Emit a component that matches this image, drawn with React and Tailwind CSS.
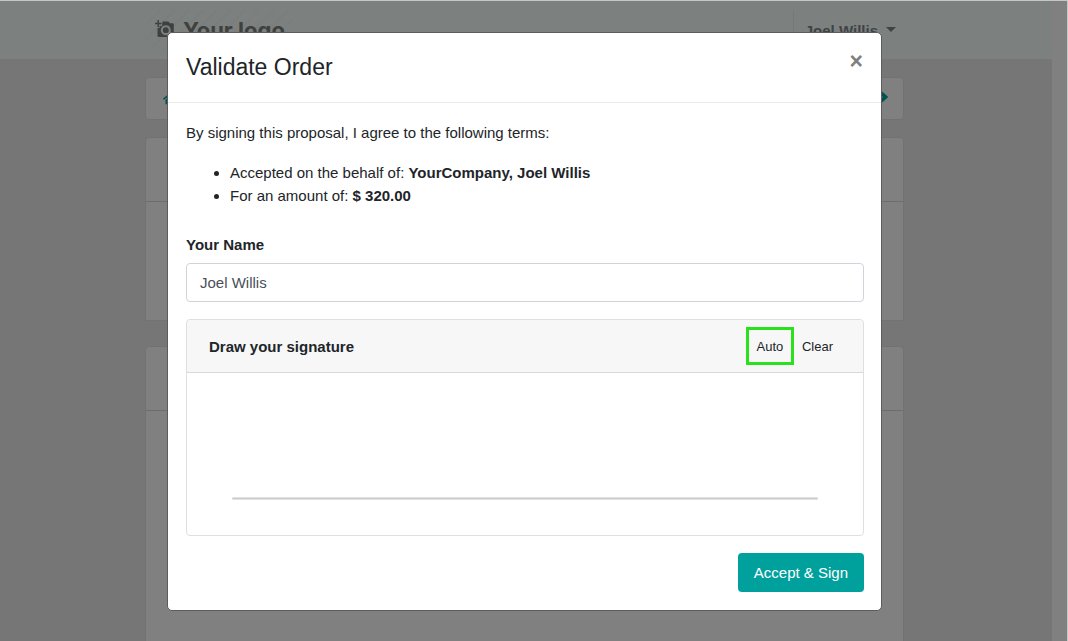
import React, { useState } from "react";
import { FaHome } from "react-icons/fa";

function CameraIcon() {
  return (
    <svg viewBox="0 0 19 18" className="mb-0.5 h-[18px] w-[19px] shrink-0" aria-hidden="true">
      <path d="M0 3.500h6.500M3.200 0v7" stroke="#3f4140" strokeWidth="1.500" />
      <path
        fillRule="evenodd"
        fill="#3f4140"
        d="M7.500 1.500h6l1.300 1.800h2.700q1.300 0 1.300 1.300v11.200q0 1.300-1.300 1.300H3.800q-1.300 0-1.300-1.300V8h2V6h2.500ZM10.800 5.200a5 5 0 1 0 .01 0Z"
      />
      <circle cx="10.800" cy="10.200" r="2.900" fill="#3f4140" />
    </svg>
  );
}

function Backdrop() {
  return (
    <div className="absolute inset-0 flex overflow-hidden bg-[#808080]" aria-hidden="true">
      <div className="flex min-w-0 flex-1 flex-col bg-[#767676]">
        <header className="flex h-[58px] shrink-0 bg-[#7c807e] pr-[3px]">
          <div className="mx-auto flex w-full max-w-[759px] items-start justify-between pt-[9px]">
            <div className="flex h-10 items-center gap-[9px] bg-[repeating-linear-gradient(135deg,#7a7e7c_0px,#7a7e7c_2px,#7c807e_2px,#7c807e_10px)] pr-2 pl-2.5">
              <CameraIcon />
              <span className="font-['Inter',sans-serif] text-[22px] leading-6 font-bold text-[#3f4140]">
                Your logo
              </span>
            </div>
            <div className="flex h-10 items-center gap-2 border-l border-[#757978] pr-2 pl-[11px] text-[15px] font-bold text-[#3f4346]">
              Joel Willis
              <svg viewBox="0 0 10 5" className="mb-0.5 h-[5px] w-2.5" aria-hidden="true">
                <path d="M0 0h10L5 5Z" fill="#3f4346" />
              </svg>
            </div>
          </div>
        </header>
        <main className="flex flex-1 flex-col pt-[18px] pr-[3px]">
          <div className="mx-auto flex w-full max-w-[759px] flex-col">
            <div className="flex h-[43px] items-center justify-between rounded border border-[#727272] bg-[#808080] pr-[15px] pl-[17px]">
              <FaHome className="size-[15px] text-[#005150]" />
              <svg viewBox="0 0 10 14" className="mb-1 h-3.5 w-2.5" aria-hidden="true">
                <path d="M1.500 1.500 7.500 7l-6 5.500" fill="none" stroke="#005150" strokeWidth="3.600" />
              </svg>
            </div>
            <div className="mt-[17px] h-[184px] rounded-t border border-[#727272] bg-[#808080]">
              <div className="h-16 border-b border-[#6d6d6d]" />
            </div>
            <div className="mt-[25px] h-[400px] rounded-t border border-[#727272] bg-[#808080]">
              <div className="h-16 border-b border-[#6d6d6d]" />
            </div>
          </div>
        </main>
      </div>
      <div className="w-[15px] shrink-0" />
    </div>
  );
}

export default function App() {
  const [name, setName] = useState("Joel Willis");
  return (
    <div className="relative flex min-h-screen border-t border-r border-[#c3c7c5] font-['Liberation_Sans',Arial,sans-serif] text-[15px] leading-[23px] text-[#212529]">
      <Backdrop />
      <div className="relative flex flex-1 items-start justify-center pt-[31px] pr-[18px] pb-[30px]">
        <section
          role="dialog"
          aria-modal="true"
          aria-labelledby="dialog-title"
          className="w-full max-w-[715px] rounded-[5px] border border-[#5c5c5c] bg-white"
        >
          <header className="flex items-start justify-between border-b border-[#e9ecef] px-[18px] py-[17px]">
            <h1 id="dialog-title" className="text-[23px] leading-[35px]">
              Validate Order
            </h1>
            <button type="button" aria-label="Close" className="text-[23px] leading-[23px] font-bold text-[#7f7f7f]">
              ×
            </button>
          </header>
          <div className="py-[18px] pr-[17px] pl-[18px]">
            <p>By signing this proposal, I agree to the following terms:</p>
            <ul className="mt-[17px] list-disc pl-[44px]">
              <li>
                Accepted on the behalf of: <b>YourCompany, Joel Willis</b>
              </li>
              <li>
                For an amount of: <b>$ 320.00</b>
              </li>
            </ul>
            <label htmlFor="signer" className="mt-[26px] block font-bold">
              Your Name
            </label>
            <input
              id="signer"
              type="text"
              value={name}
              onChange={(e) => setName(e.target.value)}
              className="mt-[7px] block h-[39px] w-full rounded border border-[#ced4da] px-[13px] text-[#495057]"
            />
            <div className="mt-[17px] rounded border border-[#dfdfdf]">
              <div className="flex h-[53px] items-center justify-between rounded-t border-b border-[#d8d8d8] bg-[#f7f7f7] pr-[22px] pl-[22px]">
                <h2 className="font-bold">Draw your signature</h2>
                <div className="flex items-center text-[13px]">
                  <button type="button" className="h-[38px] w-12 border-3 border-[#2be01c]">
                    Auto
                  </button>
                  <button type="button" className="h-[38px] px-2">
                    Clear
                  </button>
                </div>
              </div>
              <div className="flex h-[162px] items-end px-[45px] pb-[35px]">
                <div className="h-[3px] w-full rounded-full border-y border-[#e2e2e2] bg-[#cccccc]" />
              </div>
            </div>
            <div className="mt-[17px] flex justify-end">
              <button type="button" className="h-[39px] rounded bg-[#00a09d] px-4 text-white">
                Accept &amp; Sign
              </button>
            </div>
          </div>
        </section>
      </div>
    </div>
  );
}
